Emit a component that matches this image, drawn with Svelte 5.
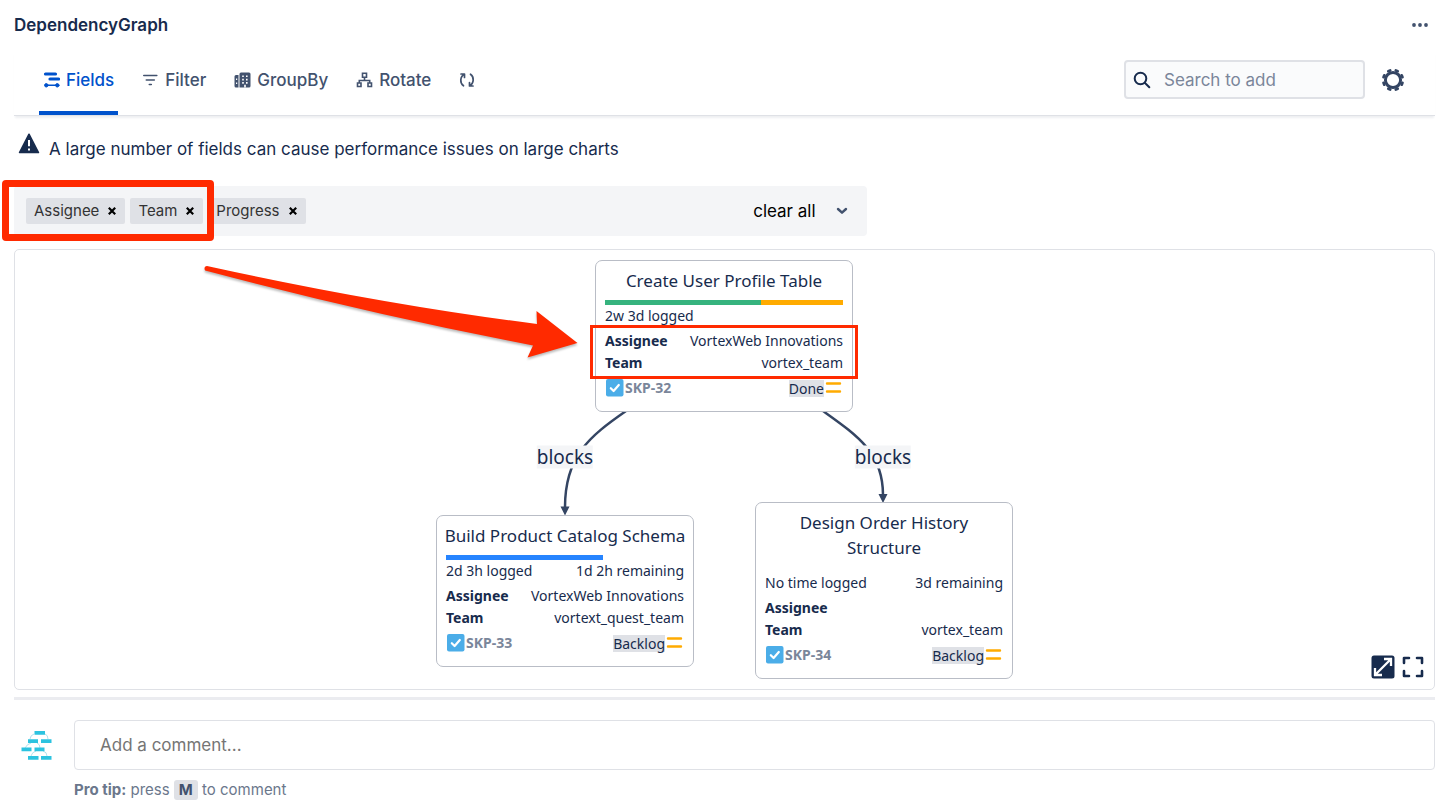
<script>
  let query = $state('');
  let comment = $state('');

  const focusFields = ['Assignee', 'Team'];
  const otherFields = ['Progress'];

  const issues = [
    {
      key: 'SKP-32', title: 'Create User Profile Table', x: 159, y: 10,
      bar: [['#36b37e', 65.5], ['#ffab00', 34.5]],
      logged: '2w 3d logged', remaining: '', assignee: 'VortexWeb Innovations',
      team: 'vortex_team', status: 'Done', marked: true
    },
    {
      key: 'SKP-33', title: 'Build Product Catalog Schema', x: 0, y: 265,
      bar: [['#2684ff', 66]],
      logged: '2d 3h logged', remaining: '1d 2h remaining', assignee: 'VortexWeb Innovations',
      team: 'vortext_quest_team', status: 'Backlog', marked: false
    },
    {
      key: 'SKP-34', title: 'Design Order History Structure', x: 319, y: 252,
      bar: [],
      logged: 'No time logged', remaining: '3d remaining', assignee: '',
      team: 'vortex_team', status: 'Backlog', marked: false
    }
  ];
  const links = [{ x: 129, y: 207 }, { x: 447, y: 207 }];
</script>

{#snippet chip(name)}
  <span class="chip">
    {name}
    <button aria-label="Remove {name}">
      <svg width="8" height="8" viewBox="0 0 8 8"><path d="M.8.800l6.400 6.400M7.200.800L.8 7.200" stroke="#000" stroke-width="2.200" /></svg>
    </button>
  </span>
{/snippet}

<main>
  <header>
    <h1>DependencyGraph</h1>
    <button class="more" aria-label="More actions">
      <svg width="16" height="4" viewBox="0 0 16 4" fill="#42526e"><circle cx="2" cy="2" r="1.9" /><circle cx="8" cy="2" r="1.9" /><circle cx="14" cy="2" r="1.9" /></svg>
    </button>
  </header>

  <div class="toolbar">
    <nav>
      <button class="tab active">
        <svg width="17" height="16" viewBox="0 0 17 16" fill="none" stroke="currentColor" stroke-linecap="round">
          <path d="M2.500 2h10M7 7h8.500" stroke-width="3.200" />
          <path d="M3 13.300h11" stroke-width="1.600" />
          <circle cx="3.300" cy="13.300" r="1.700" fill="currentColor" /><circle cx="14.300" cy="13.300" r="1.700" fill="currentColor" />
        </svg>
        Fields
      </button>
      <button class="tab">
        <svg width="17" height="16" viewBox="0 0 17 16" fill="none" stroke="currentColor" stroke-width="1.6" stroke-linecap="round">
          <path d="M1.800 3.500h13M4.300 8h8M7.300 12.500h2" />
        </svg>
        Filter
      </button>
      <button class="tab">
        <svg width="17" height="16" viewBox="0 0 17 16">
          <path d="M7 .5h8a1.500 1.500 0 0 1 1.500 1.500v12a1.500 1.500 0 0 1-1.500 1.500H5.500V2A1.500 1.500 0 0 1 7 .5zM2 3h2.500v12.500H2A1.500 1.500 0 0 1 .5 14V4.500A1.500 1.500 0 0 1 2 3z" fill="currentColor" />
          <path d="M8.200 3.500h1.600v1.600H8.200zM12 3.500h1.600v1.600H12zM8.200 6.800h1.600v1.600H8.200zM12 6.800h1.600v1.600H12zM8.200 10.100h1.600v1.600H8.200zM12 10.100h1.600v1.600H12zM10.200 12.800h1.600v2.700h-1.600zM2 6.500h1.200V8H2zM2 10.500h1.200V12H2z" fill="#fff" />
        </svg>
        GroupBy
      </button>
      <button class="tab">
        <svg width="17" height="16" viewBox="0 0 17 16" fill="none" stroke="currentColor" stroke-width="1.6">
          <path d="M6.500 1.300h4v4h-4zM1.500 11h3.500v3.500H1.500zM12 11h3.500v3.500H12zM8.500 5.300v3M3.300 11V8.500h10.400V11" />
        </svg>
        Rotate
      </button>
      <button class="tab" aria-label="Refresh">
        <svg width="16" height="16" viewBox="0 0 16 16" fill="none" stroke="currentColor" stroke-width="1.7" stroke-linecap="round" stroke-linejoin="round">
          <path d="M2 2h3.500v3.500M5.500 2.300C.8 4.500.7 11.200 4.500 13.800M14 14h-3.500v-3.500M10.500 13.700C15.200 11.500 15.300 4.800 11.500 2.200" />
        </svg>
      </button>
    </nav>
    <div class="tools">
      <label class="search">
        <svg width="18" height="18" viewBox="0 0 18 18" fill="none" stroke="#172b4d" stroke-width="2" stroke-linecap="round"><circle cx="7.500" cy="7.500" r="5.800" /><path d="M12 12l4.300 4.300" /></svg>
        <input type="text" placeholder="Search to add" aria-label="Search to add" bind:value={query} />
      </label>
      <button class="gear" aria-label="Settings">
        <svg width="24" height="24" viewBox="-12 -12 24 24" fill="none" stroke="#344563">
          <circle r="7.600" stroke-width="3" />
          {#each [22.5, 67.5, 112.5, 157.5, 202.5, 247.5, 292.5, 337.5] as angle}
            <path d="M-1-9.800h2" transform="rotate({angle})" stroke-width="2.800" stroke-linecap="round" />
          {/each}
        </svg>
      </button>
    </div>
  </div>

  <p class="warning">
    <svg width="22" height="21" viewBox="0 0 22 21">
      <path d="M11 1.200L20.500 19.500H1.500z" fill="#172b4d" stroke="#172b4d" stroke-width="1.500" stroke-linejoin="round" />
      <path d="M11 7v6.200M11 15.500v2" stroke="#fff" stroke-width="2" />
    </svg>
    A large number of fields can cause performance issues on large charts
  </p>

  <div class="fields">
    <div class="focus">
      {#each focusFields as name}{@render chip(name)}{/each}
    </div>
    {#each otherFields as name}{@render chip(name)}{/each}
    <button class="clear">clear all</button>
    <button class="open" aria-label="Show fields">
      <svg width="12" height="8" viewBox="0 0 12 8" fill="none" stroke="#42526e" stroke-width="2.400" stroke-linecap="round" stroke-linejoin="round"><path d="M2 2l4 3.700L10 2" /></svg>
    </button>
  </div>

  <section class="canvas">
    <div class="stage">
      <svg class="edges" width="577" height="440" viewBox="0 0 577 440">
        <g fill="none" stroke="#344563" stroke-width="2.5">
          <path d="M190 161C154 186 129 206 129 257" />
          <path d="M387 161C422 186 447 203 447 245" />
        </g>
        <path d="M124.500 256.500h9l-4.500 9zM442.500 244h9l-4.500 9z" fill="#344563" />
      </svg>
      {#each links as link}
        <span class="link" style="left: {link.x}px; top: {link.y}px">blocks</span>
      {/each}
      {#each issues as issue}
        <article style="left: {issue.x}px; top: {issue.y}px">
          <h2>{issue.title}</h2>
          <div class="bar">
            {#each issue.bar as [color, share]}<i style="width: {share}%; background: {color}"></i>{/each}
          </div>
          <div class="row"><span>{issue.logged}</span><span>{issue.remaining}</span></div>
          <div class="details" class:marked={issue.marked}>
            <div class="row"><b>Assignee</b><span>{issue.assignee}</span></div>
            <div class="row"><b>Team</b><span>{issue.team}</span></div>
          </div>
          <div class="row foot">
            <svg width="20" height="20" viewBox="0 0 20 20"><rect x="1" y="1" width="17.500" height="17.500" rx="2" fill="#4bade8" /><path d="M5.800 10.200l2.800 2.800 5.200-6" fill="none" stroke="#fff" stroke-width="2.200" stroke-linecap="round" stroke-linejoin="round" /></svg>
            <a href="#{issue.key}">{issue.key}</a>
            <span class="status">{issue.status}</span>
            <svg width="19" height="16" viewBox="0 0 19 16" stroke="#ffab00" stroke-width="2.400" stroke-linecap="round"><path d="M3 3.500h13M3 11.500h13" /></svg>
          </div>
        </article>
      {/each}
      <svg class="arrow" width="385" height="100" viewBox="0 0 385 100">
        <path d="M7 5Q180 43 337 63L336.500 50L377.500 82L327.500 96.500L333 84.500Q170 53 7 10A2 2 0 0 1 7 5z" fill="#ff2a00" />
      </svg>
    </div>
    <div class="zoom">
      <button aria-label="Expand">
        <svg width="24" height="24" viewBox="0 0 24 24"><rect x=".5" y=".5" width="23" height="23" rx="2.500" fill="#172b4d" /><path d="M4 20L20 4M13 4h7v7M4 13v7h7" fill="none" stroke="#fff" stroke-width="2.300" /></svg>
      </button>
      <button aria-label="Full screen">
        <svg width="22" height="22" viewBox="0 0 22 22" fill="none" stroke="#172b4d" stroke-width="2.600" stroke-linecap="round" stroke-linejoin="round"><path d="M2 7V2h5M15 2h5v5M20 15v5h-5M7 20H2v-5" /></svg>
      </button>
    </div>
  </section>

  <footer>
    <svg class="avatar" width="32" height="32" viewBox="0 0 32 32">
      <path d="M13 4Q9.500 5 9 9M24 4q3 1 3 5M10 13Q6 14 4 18M16 13q3 1 3 5M15 21Q11 22 10 26M22 21q4 1 4 5" stroke="#9adbe8" stroke-width=".8" fill="none" />
      <path d="M13.500 1h10.500v3.800H13.500zM7 9.200h10v3.800H7zM20 9.200h10.500v3.800H20zM.5 17.500h10v3.800H.5zM13.500 17.500h10v3.800h-10zM7 26h10.500v3.800H7zM20 26h10.500v3.800H20z" fill="#2cc3e0" />
    </svg>
    <div class="reply">
      <input type="text" placeholder="Add a comment..." aria-label="Add a comment" bind:value={comment} />
      <p><b>Pro tip:</b> press <kbd>M</kbd> to comment</p>
    </div>
  </footer>
</main>

<style>
  :global(body) { margin: 0; background: #fff; }
  main { padding: 0 19px 0 14px; color: #172b4d; font: 17px/24px Inter, sans-serif; }
  button { padding: 0; border: 0; background: none; font: inherit; color: inherit; display: flex; align-items: center; cursor: pointer; }
  input { font: inherit; color: inherit; min-width: 0; }
  svg { display: block; flex: none; }
  h1, h2, p { margin: 0; }
  header { display: flex; justify-content: space-between; align-items: center; height: 50px; padding-right: 7px; }
  h1 { font-size: 17px; font-weight: 600; }
  .toolbar { display: flex; justify-content: space-between; align-items: center; height: 65px; padding: 0 30px 0 25px; border-bottom: 1px solid #dfe1e6; box-shadow: 0 3px 2px -1px #eeeff2; }
  nav { display: flex; gap: 20px; align-self: stretch; }
  .tab { gap: 6px; padding: 0 4px 6px; border-bottom: 0 solid #0052cc; font-weight: 500; color: #42526e; }
  .tab.active { color: #0052cc; padding-bottom: 2px; border-bottom-width: 4px; }
  .tools { display: flex; align-items: center; gap: 16px; padding-bottom: 6px; }
  .search { display: flex; align-items: center; gap: 13px; width: 230px; height: 35px; padding: 0 0 0 7px; border: 2px solid #dfe1e6; border-radius: 4px; background: #fafbfc; }
  .search input { flex: 1; border: 0; padding: 0; background: none; outline: 0; }
  .search input::placeholder { color: #7a869a; opacity: 1; }
  .warning { display: flex; align-items: flex-start; gap: 9px; margin: 21px 0 25px 4px; line-height: 24px; }
  .warning svg { margin-top: -4px; }
  .fields { display: flex; align-items: center; gap: 5px; box-sizing: border-box; width: 60%; height: 50px; padding: 0 19px 0 12px; border-radius: 4px; background: #f4f5f7; }
  .focus { position: relative; display: flex; gap: 5px; }
  .focus::before { content: ''; position: absolute; inset: -18px -11px -17px -24px; border: 7px solid #ff2a00; border-radius: 4px; z-index: 1; pointer-events: none; }
  .chip { display: flex; align-items: center; gap: 9px; height: 26px; padding: 0 9px 0 8px; border-radius: 2px; background: #dfe1e6; color: #333; font-size: 15px; }
  .clear { margin-left: auto; color: #000; }
  .open { margin-left: 15px; }
  .canvas { position: relative; display: flex; justify-content: center; margin-top: 13px; border: 1px solid #dfe1e6; border-radius: 5px; font-family: 'Noto Sans', sans-serif; }
  .stage { position: relative; width: 577px; height: 439px; }
  .edges { position: absolute; left: 0; top: 0; }
  .arrow { position: absolute; left: -236px; top: 11px; filter: drop-shadow(0 2px 1px #0004); }
  .link { position: absolute; transform: translate(-50%, -50%); background: #f4f5f7; font-size: 19px; line-height: 23px; }
  article { position: absolute; box-sizing: border-box; width: 258px; padding: 7px 9px 12px; border: 1px solid #b9bdc6; border-radius: 7px; background: #fff; }
  h2 { margin: 0 -3px; text-align: center; font-size: 17px; line-height: 25px; font-weight: 400; }
  .bar { display: flex; height: 5px; margin-top: 7px; }
  .row { display: flex; justify-content: space-between; font-size: 14px; line-height: 22px; }
  .details { position: relative; margin: 3px 0; }
  .marked::after { content: ''; position: absolute; inset: -5px -15px; border: 3px solid #ff2a00; pointer-events: none; }
  .foot { align-items: center; }
  a { color: #7a869a; font-weight: 700; text-decoration: none; }
  .status { margin-left: auto; background: #dfe1e6; line-height: 17px; }
  .zoom { position: absolute; right: 10px; bottom: 10px; display: flex; align-items: center; gap: 7px; }
  footer { display: flex; gap: 21px; margin-top: 7px; padding: 20px 0 8px 7px; border-top: 3px solid #ebecf0; }
  .avatar { margin-top: 10px; }
  .reply { flex: 1; }
  .reply input { display: block; box-sizing: border-box; width: 100%; height: 50px; padding: 0 25px; border: 1px solid #dfe1e6; border-radius: 4px; }
  .reply input::placeholder { color: #757575; opacity: 1; }
  .reply p { margin-top: 8px; font-size: 15px; color: #6b778c; }
  kbd { display: inline-block; padding: 0 5px; border-radius: 3px; background: #dfe1e6; color: #42526e; font: 700 15px/20px Inter, sans-serif; }
</style>
